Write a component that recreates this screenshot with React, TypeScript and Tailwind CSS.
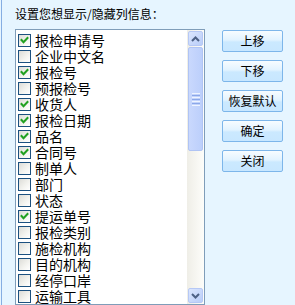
import React from "react";

const items: [string, boolean][] = [
  ["报检申请号", true],
  ["企业中文名", false],
  ["报检号", true],
  ["预报检号", false],
  ["收货人", true],
  ["报检日期", true],
  ["品名", true],
  ["合同号", true],
  ["制单人", false],
  ["部门", false],
  ["状态", false],
  ["提运单号", true],
  ["报检类别", false],
  ["施检机构", false],
  ["目的机构", false],
  ["经停口岸", false],
  ["运输工具", false],
];

const buttons = ["上移", "下移", "恢复默认", "确定", "关闭"];

function Check({ on }: { on: boolean }) {
  return (
    <div className="w-[13px] h-[13px] shrink-0 border border-[#1c5180] bg-[linear-gradient(135deg,#dcdcd7_0%,#f4f4f0_60%,#ffffff_100%)] relative">
      {on && (
        <svg width="11" height="11" viewBox="0 0 11 11" className="absolute left-0 top-0">
          <path d="M2.5 5 L4.5 7.2 L8.5 3" fill="none" stroke="#21a121" strokeWidth="2" strokeLinecap="square" />
        </svg>
      )}
    </div>
  );
}

export default function App() {
  return (
    <div
      className="w-[295px] h-[305px] overflow-hidden bg-[#e6f5ff] flex"
      style={{ fontFamily: '"Noto Sans CJK SC", "Noto Sans", sans-serif' }}
    >
      <div className="w-[1px] shrink-0" />
      <div className="w-[1px] shrink-0 bg-[#86aee2]" />
      <div className="flex flex-col pl-[13px]">
        <div className="h-[32px] pt-[7px] text-[12px] leading-[14px] text-black">设置您想显示/隐藏列信息：</div>
        <div className="flex">
          <div className="w-[190px] h-[276px] border border-[#7f9db9] bg-white flex shrink-0">
            <div className="flex-1 overflow-hidden pt-[2px] pl-[2px]">
              {items.map(([t, on]) => (
                <div key={t} className="h-[16px] flex items-center gap-[4px]">
                  <Check on={on} />
                  <span className="text-[14px] leading-[16px] text-black whitespace-nowrap">{t}</span>
                </div>
              ))}
            </div>
            <div className="w-[17px] flex flex-col bg-[linear-gradient(90deg,#efeee7,#fdfdfa)]">
              <div className="h-[17px] p-[1px]">
                <div className="h-full rounded-[2px] border border-[#b6c8f5] bg-[linear-gradient(135deg,#dbe6fe,#b9cdf8)] flex items-center justify-center">
                  <svg width="9" height="6" viewBox="0 0 9 6">
                    <path d="M1 5 L4.5 1.5 L8 5" fill="none" stroke="#4d6185" strokeWidth="2" />
                  </svg>
                </div>
              </div>
              <div className="h-[104px] px-[1px]">
                <div className="h-full rounded-[2px] border border-[#b0c4f4] bg-[linear-gradient(90deg,#c9d8fd,#bccffb)] flex flex-col items-center justify-center gap-[1px]">
                  <div className="w-[8px] h-[1px] bg-[#eef4ff]" />
                  <div className="w-[8px] h-[1px] bg-[#8ca8e8]" />
                  <div className="w-[8px] h-[1px] bg-[#eef4ff]" />
                  <div className="w-[8px] h-[1px] bg-[#8ca8e8]" />
                  <div className="w-[8px] h-[1px] bg-[#eef4ff]" />
                  <div className="w-[8px] h-[1px] bg-[#8ca8e8]" />
                  <div className="w-[8px] h-[1px] bg-[#eef4ff]" />
                </div>
              </div>
              <div className="flex-1" />
              <div className="h-[17px] p-[1px]">
                <div className="h-full rounded-[2px] border border-[#b6c8f5] bg-[linear-gradient(135deg,#dbe6fe,#b9cdf8)] flex items-center justify-center">
                  <svg width="9" height="6" viewBox="0 0 9 6">
                    <path d="M1 1 L4.5 4.5 L8 1" fill="none" stroke="#4d6185" strokeWidth="2" />
                  </svg>
                </div>
              </div>
            </div>
          </div>
          <div className="flex flex-col gap-[8px] ml-[17px] pt-[1px]">
            {buttons.map((b) => (
              <div
                key={b}
                className="w-[61px] h-[22px] rounded-[2px] border border-[#7db6ea] bg-[linear-gradient(180deg,#f7fcff_0%,#e2f3ff_45%,#cbe9ff_55%,#c8e7ff_100%)] flex items-center justify-center text-[12px] leading-[14px] text-black"
              >
                {b}
              </div>
            ))}
          </div>
        </div>
      </div>
    </div>
  );
}
